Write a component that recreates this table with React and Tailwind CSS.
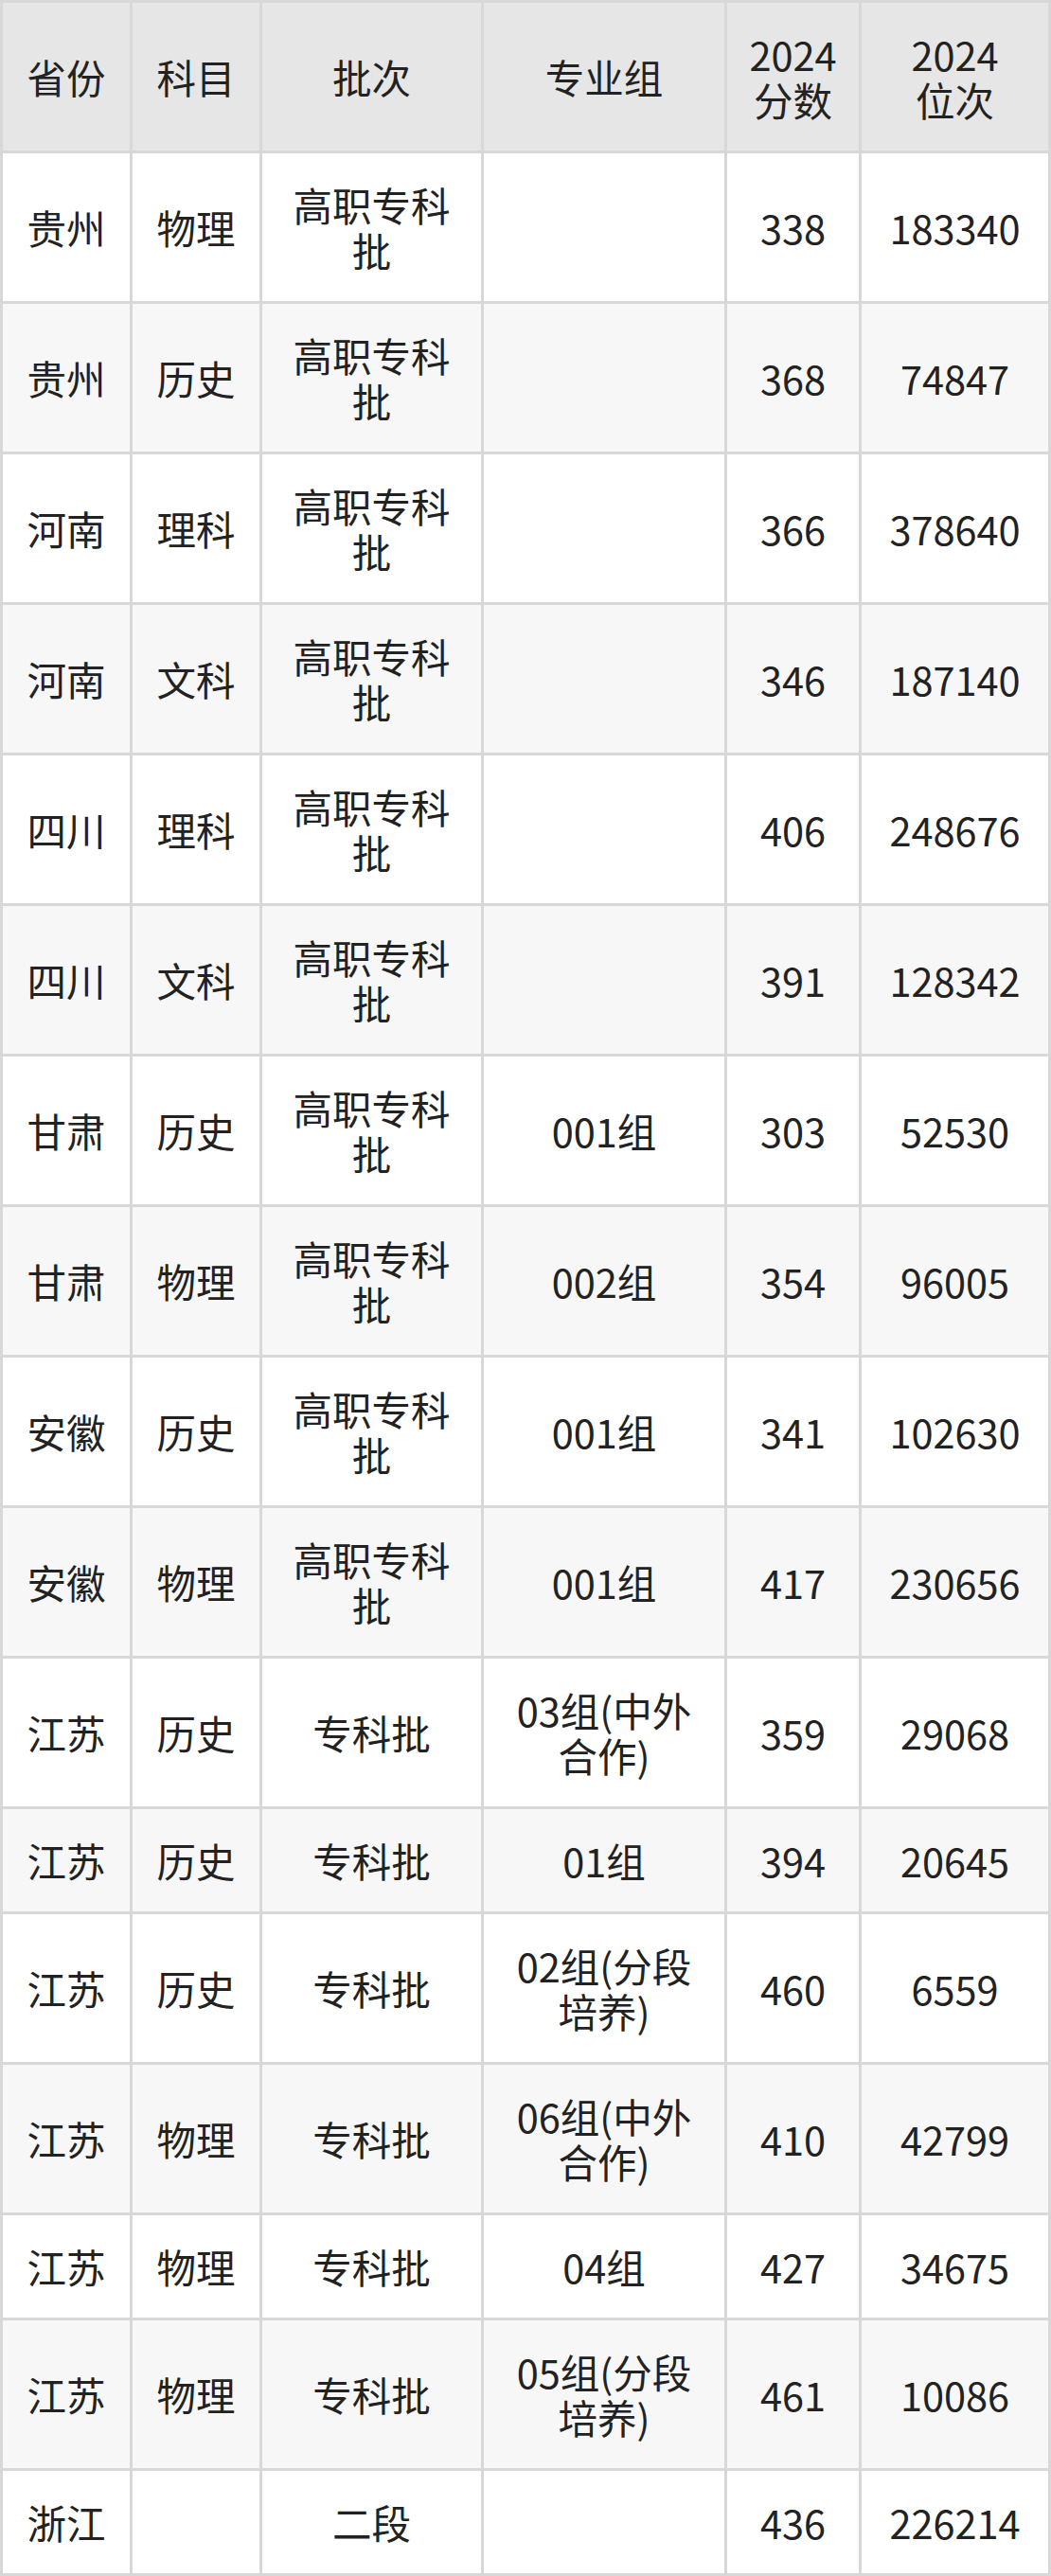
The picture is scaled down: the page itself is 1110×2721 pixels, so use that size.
import React from 'react';

const head = ['省份', '科目', '批次', '专业组', '2024\n分数', '2024\n位次'];

const rows = [
  ['贵州', '物理', '高职专科\n批', '', '338', '183340'],
  ['贵州', '历史', '高职专科\n批', '', '368', '74847'],
  ['河南', '理科', '高职专科\n批', '', '366', '378640'],
  ['河南', '文科', '高职专科\n批', '', '346', '187140'],
  ['四川', '理科', '高职专科\n批', '', '406', '248676'],
  ['四川', '文科', '高职专科\n批', '', '391', '128342'],
  ['甘肃', '历史', '高职专科\n批', '001组', '303', '52530'],
  ['甘肃', '物理', '高职专科\n批', '002组', '354', '96005'],
  ['安徽', '历史', '高职专科\n批', '001组', '341', '102630'],
  ['安徽', '物理', '高职专科\n批', '001组', '417', '230656'],
  ['江苏', '历史', '专科批', '03组(中外\n合作)', '359', '29068'],
  ['江苏', '历史', '专科批', '01组', '394', '20645'],
  ['江苏', '历史', '专科批', '02组(分段\n培养)', '460', '6559'],
  ['江苏', '物理', '专科批', '06组(中外\n合作)', '410', '42799'],
  ['江苏', '物理', '专科批', '04组', '427', '34675'],
  ['江苏', '物理', '专科批', '05组(分段\n培养)', '461', '10086'],
  ['浙江', '', '二段', '', '436', '226214'],
];

function Cell({ text, bg }) {
  return (
    <div className={`${bg} flex items-center justify-center py-[30px] px-1 text-center whitespace-pre-line`}>
      <span className="block min-h-[48px]">{text}</span>
    </div>
  );
}

export default function App() {
  return (
    <div
      className="w-[1110px] bg-white text-[#222] text-[41.5px] leading-[48px]"
      style={{ fontFamily: '"Noto Sans CJK SC", "Noto Sans", sans-serif' }}
    >
      <div className="grid grid-cols-[134px_134px_231px_254px_139px_197px] gap-[3px] p-[3px] bg-[#d8d8d8]">
        {head.map((h, i) => (
          <Cell key={'h' + i} text={h} bg="bg-[#e6e6e6]" />
        ))}
        {rows.map((r, ri) =>
          r.map((c, ci) => (
            <Cell key={ri + '-' + ci} text={c} bg={ri % 2 === 0 ? 'bg-white' : 'bg-[#f7f7f7]'} />
          ))
        )}
      </div>
    </div>
  );
}
